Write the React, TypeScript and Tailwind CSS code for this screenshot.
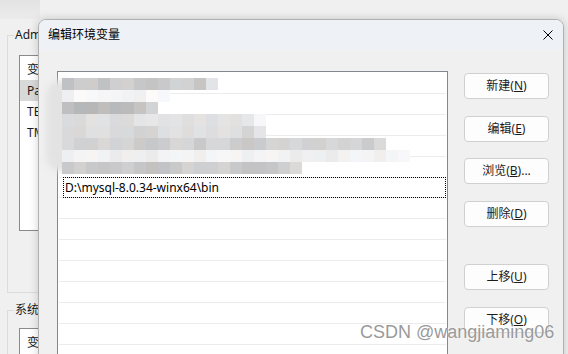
import React from "react";

const mosaicRows = [
  { n: 13, base: 202, v: 9 },
  { n: 9, base: 245, v: 6 },
  { n: 8, base: 188, v: 9 },
  { n: 17, base: 226, v: 8 },
  { n: 17, base: 218, v: 8 },
  { n: 27, base: 207, v: 9 },
  { n: 29, base: 240, v: 7 },
  { n: 20, base: 204, v: 10 },
];

function blockColor(r: number, i: number, base: number, v: number, n: number) {
  const seed = (i * 37 + r * 91 + i * i * 13) % (2 * v + 1);
  let g = base + seed - v;
  if (i === n - 1) g = Math.min(248, g + 18);
  const t = ((i + r) % 3) - 1;
  const rr = Math.max(0, Math.min(255, g + t));
  const bb = Math.max(0, Math.min(255, g - t + (i % 4 === 0 ? 3 : 0)));
  return `rgb(${rr},${g},${bb})`;
}

function Btn({ label, u, suffix = "", className = "" }: { label: string; u: string; suffix?: string; className?: string }) {
  return (
    <div
      className={`h-[26px] w-[85px] rounded-[4px] border border-[#d0d0d0] bg-[#fdfdfd] flex items-center justify-center text-[12px] text-[#1b1b1b] ${className}`}
    >
      <span>
        {label}(<span className="underline underline-offset-[1px]">{u}</span>){suffix}
      </span>
    </div>
  );
}

export default function App() {
  const rows = Array.from({ length: 14 });
  return (
    <div className="relative w-[568px] h-[354px] overflow-hidden bg-[#f0f0f0] font-['Noto_Sans','Noto_Sans_CJK_SC',sans-serif] text-[12px] text-[#1a1a1a]">
      {/* background window (only its left strip is visible) */}
      <div className="flex flex-col w-[40px] overflow-hidden">
        <div className="h-[19px] w-[600px] bg-gradient-to-b from-[#e3e3e3] to-[#ebebeb]" />
        <div className="pl-[7px] w-[600px]">
          <fieldset className="mt-[8px] w-[560px] h-[266px] border border-[#dcdcdc] pl-[6px]">
            <legend className="px-[1px] leading-[16px]">Adm</legend>
            <div className="ml-[5px] mt-[12px] h-[176px] w-[520px] border border-[#8a8a8a] bg-white pt-[3px]">
              <div className="h-[21px] pl-[7px] flex items-center">变</div>
              <div className="h-[21px] pl-[7px] flex items-center bg-[#d9d9d9]">Pa</div>
              <div className="h-[21px] pl-[7px] flex items-center">TE</div>
              <div className="h-[21px] pl-[7px] flex items-center">TM</div>
            </div>
          </fieldset>
          <fieldset className="mt-[9px] w-[560px] h-[100px] border border-[#dcdcdc] pl-[6px]">
            <legend className="px-[1px] leading-[16px]">系统</legend>
            <div className="ml-[5px] mt-[10px] h-[80px] w-[520px] border border-[#8a8a8a] bg-white pt-[3px]">
              <div className="h-[21px] pl-[7px] flex items-center">变</div>
            </div>
          </fieldset>
        </div>
      </div>

      {/* dialog */}
      <div className="absolute left-[38px] top-[19px] w-[526px] h-[360px] rounded-t-[8px] border border-[#b0b0b0] bg-[#f0f0f0] shadow-[0_0_10px_rgba(0,0,0,0.18)] flex flex-col overflow-hidden">
        <div className="h-[30px] shrink-0 bg-[#eef2f7] flex items-center justify-between pl-[9px] pr-[9px]">
          <span className="text-[12px] text-black">编辑环境变量</span>
          <svg width="10" height="10" viewBox="0 0 10 10" className="mr-[1px]">
            <path d="M0.5 0.5 L9.5 9.5 M9.5 0.5 L0.5 9.5" stroke="#000" strokeWidth="1" fill="none" />
          </svg>
        </div>
        <div className="flex pl-[18px] pt-[21px]">
          <div className="relative w-[391px] h-[300px] shrink-0 border border-[#828790] bg-white pt-[1px] px-[1px]">
            {rows.map((_, i) =>
              i === 5 ? (
                <div key={i} className="h-[21px] border-b border-[#ececec] pl-[4px]">
                  <div className="h-[21px] -mt-[1px] border border-dotted border-black flex items-center pl-[1px] text-[12px] text-black">
                    D:\mysql-8.0.34-winx64\bin
                  </div>
                </div>
              ) : (
                <div key={i} className="h-[21px] border-b border-[#ececec]" />
              )
            )}
            {/* redaction mosaic */}
            <div className="absolute left-[-12px] top-[8px] w-[34px] h-[92px] rounded-[16px] bg-[#e3e3e3] blur-[3px]" />
            <div className="absolute left-[4px] top-[6px] flex flex-col blur-[0.6px]">
              {mosaicRows.map((r, ri) => (
                <div key={ri} className="flex h-[12px]">
                  {Array.from({ length: r.n }).map((_, i) => (
                    <div
                      key={i}
                      className="w-[12px] h-[12px]"
                      style={{ backgroundColor: blockColor(ri, i, r.base, r.v, r.n) }}
                    />
                  ))}
                </div>
              ))}
            </div>
          </div>
          <div className="ml-[16px] flex flex-col">
            <Btn label="新建" u="N" className="mt-[2px]" />
            <Btn label="编辑" u="E" className="mt-[17px]" />
            <Btn label="浏览" u="B" suffix="..." className="mt-[16px]" />
            <Btn label="删除" u="D" className="mt-[17px]" />
            <Btn label="上移" u="U" className="mt-[37px]" />
            <Btn label="下移" u="O" className="mt-[17px]" />
          </div>
        </div>
      </div>

      {/* watermark */}
      <div className="absolute left-[360px] top-[322px] font-['Liberation_Sans',sans-serif] text-[18px] leading-[21px] text-[#9a9a9a] [text-shadow:0_0_2px_#fff]">
        CSDN @wangjiaming06
      </div>
    </div>
  );
}
